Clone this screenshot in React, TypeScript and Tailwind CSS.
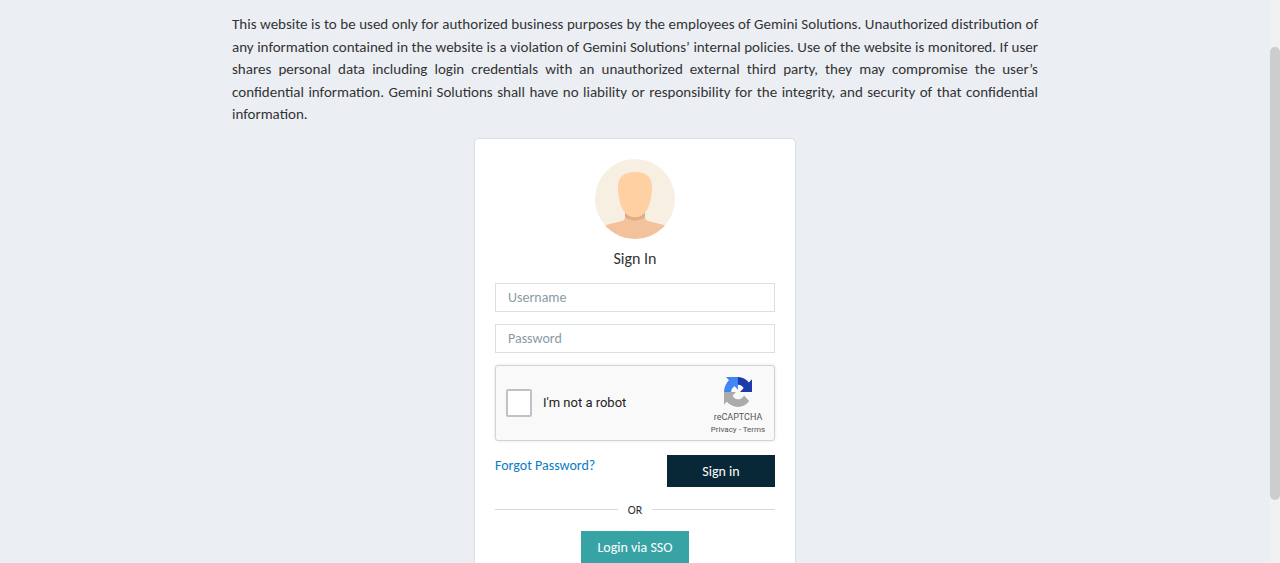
function Avatar() {
  return (
    <svg viewBox="0 0 80 80" className="block size-20" aria-hidden="true">
      <defs>
        <clipPath id="avatar-circle">
          <circle cx="40" cy="40" r="40" />
        </clipPath>
      </defs>
      <g clipPath="url(#avatar-circle)">
        <rect width="80" height="80" fill="#f8efe3" />
        <path
          d="M30 50V58.5C30 61 28 61.8 25 62.6L9 66.5V80H71V66.5L55 62.6C52 61.8 50 61 50 58.5V50Z"
          fill="#f3c19c"
        />
        <path d="M30 53V58C35 62.6 45 62.6 50 58V53Z" fill="#dfad89" />
        <path
          d="M40 13C51 13 57 18 57 27.5C57 37 55 47.5 50.5 53C45 60 35 60 29.5 53C25 47.5 23 37 23 27.5C23 18 29 13 40 13Z"
          fill="#ffd0a1"
        />
      </g>
    </svg>
  );
}

function RecaptchaLogo() {
  return (
    <svg viewBox="0 0 64 64" preserveAspectRatio="none" className="block h-[30px] w-7" aria-hidden="true">
      <path
        fill="#1c3aa9"
        d="M64 31.955l-.033-1.37V4.687l-7.16 7.16C50.948 4.674 42.033.093 32.05.093c-10.4 0-19.622 4.96-25.458 12.64l11.736 11.86a15.55 15.55 0 0 1 4.754-5.334c2.05-1.6 4.952-2.906 8.968-2.906.485 0 .86.057 1.135.163 4.976.393 9.288 3.14 11.828 7.124l-8.307 8.307L64 31.953"
      />
      <path
        fill="#4285f4"
        d="M31.862.094l-1.37.033H4.594l7.16 7.16C4.58 13.147 0 22.06 0 32.046c0 10.4 4.96 19.622 12.64 25.458L24.5 45.768a15.55 15.55 0 0 1-5.334-4.754c-1.6-2.05-2.906-4.952-2.906-8.968 0-.485.057-.86.163-1.135.393-4.976 3.14-9.288 7.124-11.828l8.307 8.307L31.86.095"
      />
      <path
        fill="#ababab"
        d="M.001 32.045l.033 1.37v25.898l7.16-7.16c5.86 7.173 14.774 11.754 24.76 11.754 10.4 0 19.622-4.96 25.458-12.64l-11.736-11.86a15.55 15.55 0 0 1-4.754 5.334c-2.05 1.6-4.952 2.906-8.968 2.906-.485 0-.86-.057-1.135-.163-4.976-.393-9.288-3.14-11.828-7.124l8.307-8.307c-10.522.04-22.4.066-27.295-.005"
      />
    </svg>
  );
}

function Recaptcha() {
  return (
    <div className="mt-3 flex h-19 items-center justify-between rounded-[3px] border border-[#d3d3d3] bg-[#f9f9f9] pr-2 pl-2.5 font-[Roboto,sans-serif] shadow-[0_0_3px_rgba(0,0,0,0.12)]">
      <label className="flex items-center gap-[11px] text-[13px] text-[#222]">
        <input
          type="checkbox"
          className="h-7 w-[26px] appearance-none rounded-[2px] border-2 border-[#c1c1c1] bg-white"
        />
        I'm not a robot
      </label>
      <div className="flex w-14 flex-col items-center pt-2 text-[#555]">
        <RecaptchaLogo />
        <span className="mt-1 text-[9px] leading-[13px]">reCAPTCHA</span>
        <span className="text-[8px] leading-3 whitespace-nowrap">
          <a href="#privacy">Privacy</a> - <a href="#terms">Terms</a>
        </span>
      </div>
    </div>
  );
}

const fieldClass =
  "block h-[29px] w-full border border-[#d6e1e7] bg-white px-3 text-[14px] text-[#333] outline-none placeholder:text-[#8a9ba3]";

export default function App() {
  return (
    <div className="flex h-screen bg-[#ebeff4] font-[Calibri,Carlito,Lato,sans-serif] text-[#333]">
      <main className="flex min-w-0 flex-1 flex-col items-center overflow-hidden px-4 pt-[13px]">
        <p className="max-w-[806px] text-justify text-[15px] leading-normal">
          This website is to be used only for authorized business purposes by the employees of Gemini Solutions.
          Unauthorized distribution of any information contained in the website is a violation of Gemini Solutions’
          internal policies. Use of the website is monitored. If user shares personal data including login credentials
          with an unauthorized external third party, they may compromise the user’s confidential information. Gemini
          Solutions shall have no liability or responsibility for the integrity, and security of that confidential
          information.
        </p>
        <form
          className="mt-3 w-full max-w-[322px] shrink-0 rounded-[5px] border border-[#d6e1e7] bg-white p-5"
          onSubmit={(e) => e.preventDefault()}
        >
          <div className="flex flex-col items-center">
            <Avatar />
            <h1 className="mt-2.5 text-[16px] leading-5">Sign In</h1>
          </div>
          <input type="text" aria-label="Username" placeholder="Username" className={`mt-3.5 ${fieldClass}`} />
          <input type="password" aria-label="Password" placeholder="Password" className={`mt-3 ${fieldClass}`} />
          <Recaptcha />
          <div className="mt-3.5 flex items-start justify-between">
            <a href="#forgot" className="text-[14px] leading-[22px] text-[#0a7cc4]">
              Forgot Password?
            </a>
            <button type="submit" className="h-8 w-27 bg-[#082838] pt-px text-[14px] text-white">
              Sign in
            </button>
          </div>
          <div className="mt-3 flex items-center gap-2.5 text-[12px] leading-[22px]">
            <span className="h-px flex-1 bg-[#d8d8d8]" />
            OR
            <span className="h-px flex-1 bg-[#d8d8d8]" />
          </div>
          <button type="button" className="mx-auto mt-2.5 block h-8 w-27 bg-[#38a3a5] pt-px text-[14px] text-white">
            Login via SSO
          </button>
        </form>
      </main>
      <div className="flex w-2.5 shrink-0 flex-col bg-[#f1f1f1]" aria-hidden="true">
        <div className="h-[8.3%]" />
        <div className="h-[80.6%] rounded-full bg-[#cdcdcd]" />
      </div>
    </div>
  );
}
